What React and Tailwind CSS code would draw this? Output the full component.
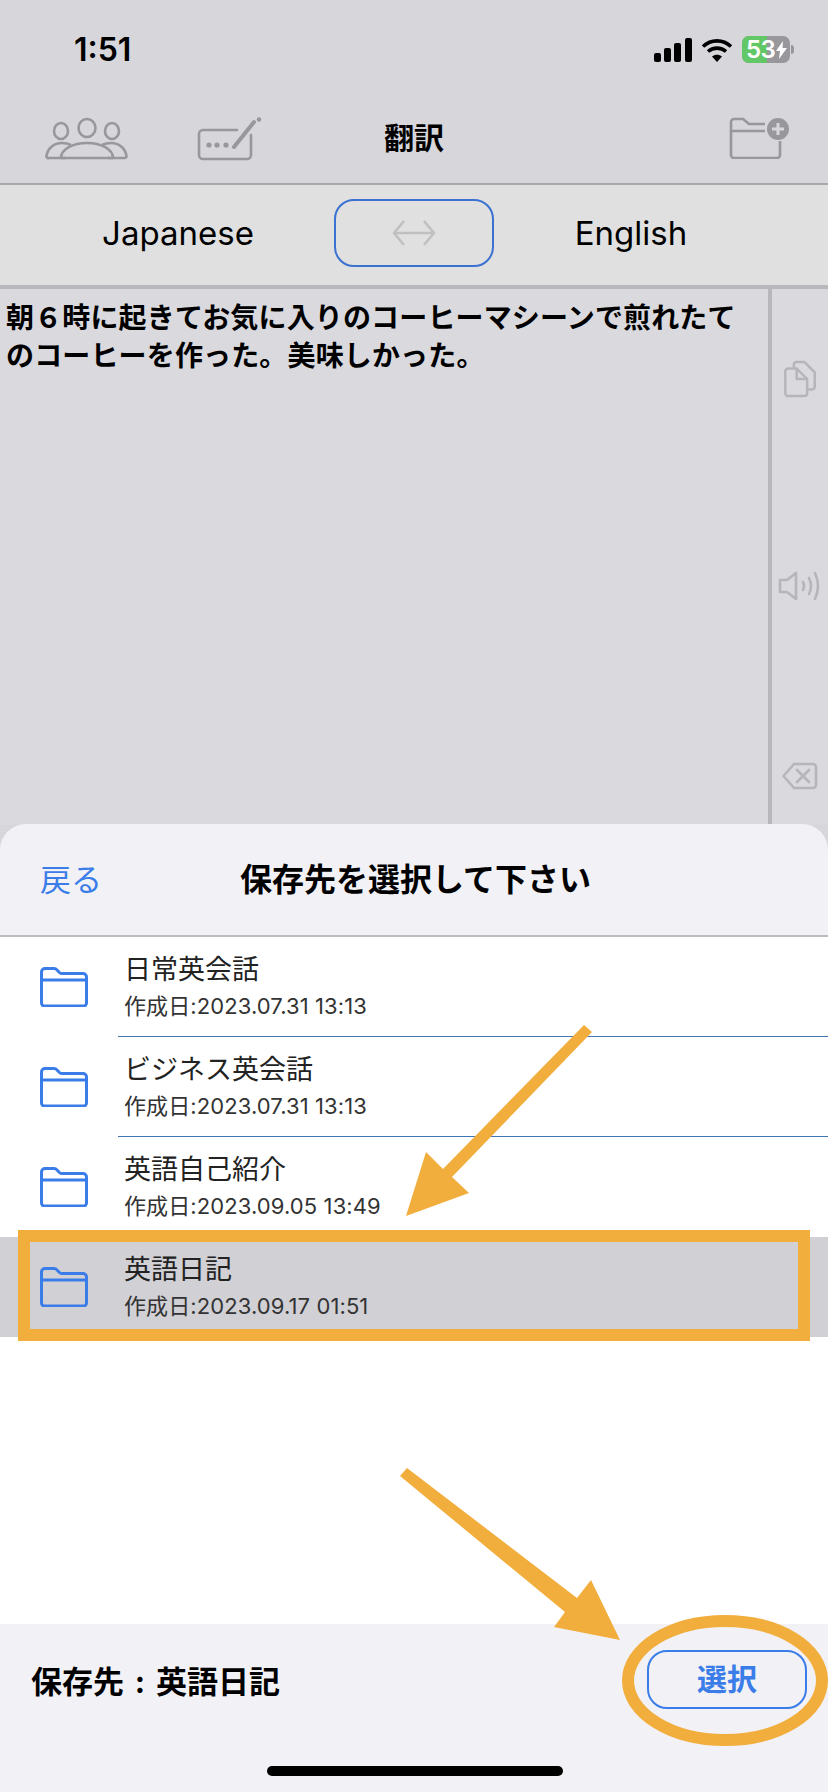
const font = "font-['Inter','Noto_Sans_CJK_JP',sans-serif]";

const folders = [
  { name: "日常英会話", date: "作成日:2023.07.31 13:13" },
  { name: "ビジネス英会話", date: "作成日:2023.07.31 13:13" },
  { name: "英語自己紹介", date: "作成日:2023.09.05 13:49" },
  { name: "英語日記", date: "作成日:2023.09.17 01:51", selected: true },
];

const FolderIcon = () => (
  <svg width="48" height="40" viewBox="0 0 48 40" fill="none" stroke="#3b7de8" strokeWidth="3" strokeLinejoin="round">
    <path d="M1.5 5 a3.5 3.5 0 0 1 3.5 -3.5 h9 a4 4 0 0 1 3 1.4 l2 2.2 a4 4 0 0 0 3 1.4 h21 a3.5 3.5 0 0 1 3.5 3.5 v26 a3 3 0 0 1 -3 3 h-39 a3 3 0 0 1 -3 -3 z" />
    <path d="M1.5 13 h45" />
  </svg>
);

const PeopleIcon = () => (
  <svg width="84" height="44" viewBox="0 0 84 44" fill="none" stroke="#98989c" strokeWidth="2.6">
    <ellipse cx="16" cy="14" rx="7" ry="8" />
    <ellipse cx="42" cy="11" rx="8.5" ry="9" />
    <ellipse cx="67" cy="14" rx="7" ry="8" />
    <path d="M21 41 H4 a2 2 0 0 1 -2.5 -2.5 C3 31 9 26 17 26 c4 0 7 1 9 2" />
    <path d="M16 41 c0 -9 12 -15 26 -15 s26 6 26 15 z" strokeLinejoin="round" />
    <path d="M63 41 h16.5 a2 2 0 0 0 2 -2.5 C80 31 74 26 66 26 c-4 0 -7 1 -9 2" />
  </svg>
);

const KeyboardPenIcon = () => (
  <svg width="66" height="44" viewBox="0 0 66 44" fill="none" stroke="#98989c" strokeWidth="2.6" strokeLinecap="round">
    <path d="M40 13 H6 a4 4 0 0 0 -4 4 v21 a4 4 0 0 0 4 4 h44 a4 4 0 0 0 4 -4 V18" />
    <circle cx="12" cy="28" r="2.6" fill="#98989c" stroke="none" />
    <circle cx="20" cy="28" r="2.6" fill="#98989c" stroke="none" />
    <circle cx="29" cy="28" r="2.6" fill="#98989c" stroke="none" />
    <path d="M37 30 L57 5" strokeWidth="4" />
    <circle cx="62" cy="2.5" r="2.2" fill="#98989c" stroke="none" />
  </svg>
);

const FolderPlusIcon = () => (
  <svg width="60" height="42" viewBox="0 0 60 42" fill="none">
    <path d="M36 7 H20 l-6 -5 H5 a3 3 0 0 0 -3 3 v33 a3 3 0 0 0 3 3 h43 a3 3 0 0 0 3 -3 V24 M2 14 h34" stroke="#98989c" strokeWidth="2.6" strokeLinejoin="round" />
    <circle cx="49" cy="12" r="11" fill="#98989c" />
    <path d="M49 6 v12 M43 12 h12" stroke="#d6d6db" strokeWidth="3" />
  </svg>
);

const CopyIcon = () => (
  <svg width="33" height="38" viewBox="0 0 34 40" fill="none" stroke="#b5b5ba" strokeWidth="2.6" strokeLinejoin="round">
    <path d="M10 8 V5 a3 3 0 0 1 3 -3 h8 l11 11 v15 a3 3 0 0 1 -3 3 h-4" />
    <path d="M4 9 h9 l11 11 v15 a3 3 0 0 1 -3 3 H4 a3 3 0 0 1 -3 -3 V12 a3 3 0 0 1 3 -3 z" />
    <path d="M13 9 v11 h11" />
  </svg>
);

const SpeakerIcon = () => (
  <svg width="44" height="30" viewBox="0 0 44 30" fill="none" stroke="#b5b5ba" strokeWidth="2.6" strokeLinecap="round" strokeLinejoin="round">
    <path d="M2 9 h7 L18 2 v26 L9 21 H2 z" />
    <path d="M25 11 q2 4 0 8" />
    <path d="M31 7 q4 8 0 16" />
    <path d="M37 2 q6 13 0 26" />
  </svg>
);

const DeleteIcon = () => (
  <svg width="36" height="28" viewBox="0 0 36 28" fill="none" stroke="#b5b5ba" strokeWidth="2.6" strokeLinejoin="round">
    <path d="M12 2 H31 a3 3 0 0 1 3 3 v18 a3 3 0 0 1 -3 3 H12 L1.5 14 z" />
    <path d="M15 8 l12 12 M27 8 l-12 12" strokeLinecap="round" />
  </svg>
);

const SwapIcon = () => (
  <svg width="44" height="28" viewBox="0 0 44 28" fill="none" stroke="#c0c0c0" strokeWidth="2.6" strokeLinejoin="round">
    <path d="M12 2 L2 14 L12 26 M32 2 L42 14 L32 26 M2 14 H42" />
  </svg>
);

const StatusIcons = () => (
  <div className="flex h-[27px] items-center gap-[9px]">
    <svg width="38" height="24" viewBox="0 0 38 24" fill="#000">
      <rect x="0" y="15" width="7" height="9" rx="2" />
      <rect x="10" y="10" width="7" height="14" rx="2" />
      <rect x="20" y="5" width="7" height="19" rx="2" />
      <rect x="31" y="0" width="7" height="24" rx="2" />
    </svg>
    <svg width="32" height="24" viewBox="0 0 32 24" fill="none" stroke="#000" strokeWidth="3.6">
      <path d="M2 8.5 C10 1 22 1 30 8.5" />
      <path d="M7 13.5 C12 9 20 9 25 13.5" />
      <path d="M16 24 l-5 -5.5 C14 16 18 16 21 18.5 z" fill="#000" stroke="none" />
    </svg>
    <div className="flex items-center gap-[1px]">
      <div className="relative flex h-[27px] w-[48px] items-center overflow-hidden rounded-[7px] bg-[#98989c]">
        <div className="absolute inset-y-0 left-0 w-[25px] bg-[#62c766]" />
        <span className="relative pl-[4px] text-[24px] leading-none font-semibold tracking-[-0.5px] text-white">53</span>
        <svg className="relative ml-[1px]" width="11" height="18" viewBox="0 0 11 18" fill="#fff">
          <path d="M7 0 L0 10 h4 L3 18 L11 7 H6.5 z" />
        </svg>
      </div>
      <div className="h-[9px] w-[3px] rounded-r-full bg-[#98989c]" />
    </div>
  </div>
);

// hand drawn annotations on top of the screenshot
const Annotations = () => (
  <svg className="absolute top-0 left-0" width="828" height="1792" viewBox="0 0 828 1792">
    <rect x="24" y="1236" width="780" height="99" fill="none" stroke="#f2ae3d" strokeWidth="12" />
    <ellipse cx="725" cy="1680.5" rx="97" ry="59.5" fill="none" stroke="#f2ae3d" strokeWidth="12" />
    <polygon points="584,1025 592,1032 452,1177 469,1193 406,1216 426,1152 443,1169" fill="#f2ae3d" />
    <polygon points="407,1468 577,1598 591,1580 620,1640 554,1627 565,1612 400,1476" fill="#f2ae3d" />
  </svg>
);

export default function App() {
  return (
    <div className={`relative flex h-[1792px] w-[828px] flex-col overflow-hidden bg-[#d6d6db] ${font}`}>
      {/* Status bar */}
      <div className="flex h-[96px] items-start justify-between pt-[36px] pr-[34px] pl-[74px]">
        <span className="text-[32px] leading-[27px] font-semibold text-black">1:51</span>
        <StatusIcons />
      </div>

      {/* Nav bar */}
      <div className="relative flex h-[89px] items-start justify-between border-b-2 border-[#a9a9ad] pt-[21px] pr-[39px] pl-[45px]">
        <div className="flex items-start gap-[68px]">
          <PeopleIcon />
          <KeyboardPenIcon />
        </div>
        <span className="absolute top-[20px] left-0 w-full text-center text-[30px] leading-[44px] font-bold text-black">翻訳</span>
        <FolderPlusIcon />
      </div>

      {/* Language bar */}
      <div className="flex h-[104px] items-start justify-center border-b-4 border-[#b8b8bc] bg-[#e0e0e0] pt-[14px]">
        <span className="w-[334px] pt-[14px] pl-[22px] text-center text-[33px] leading-[40px] text-black">Japanese</span>
        <div className="flex h-[68px] w-[160px] items-center justify-center rounded-[20px] border-2 border-[#3b71d0]">
          <SwapIcon />
        </div>
        <span className="w-[334px] pt-[14px] pr-[60px] text-center text-[33px] leading-[40px] text-black">English</span>
      </div>

      {/* Text area with side tools */}
      <div className="flex h-[536px] bg-[#d9d9de]">
        <p className="flex-1 pt-[10px] pr-[24px] pl-[6px] text-[28px] leading-[38px] font-bold tracking-[0.15px] text-black">
          朝６時に起きてお気に入りのコーヒーマシーンで煎れたてのコーヒーを作った。美味しかった。
        </p>
        <div className="flex w-[60px] flex-col items-center border-l-4 border-[#b8b8bc] pt-[71px]">
          <CopyIcon />
          <div className="mt-[173px]">
            <SpeakerIcon />
          </div>
          <div className="mt-[161px]">
            <DeleteIcon />
          </div>
        </div>
      </div>

      {/* Bottom sheet */}
      <div className="absolute top-[824px] left-0 flex h-[968px] w-full flex-col rounded-t-[26px] bg-[#f1f1f6]">
        <div className="relative flex h-[113px] items-center border-b-2 border-[#bcbcc0] pl-[40px]">
          <span className="text-[31px] leading-none text-[#3b7de8]">戻る</span>
          <span className="absolute left-[240px] text-[32px] leading-none font-bold text-black">保存先を選択して下さい</span>
        </div>
        <div className="flex h-[687px] flex-col bg-white">
          {folders.map((f, i) => (
            <div key={f.name} className={`flex h-[100px] ${f.selected ? "bg-[#d0d0d5]" : ""}`}>
              <div className="flex w-[118px] shrink-0 items-center pl-[40px]">
                <FolderIcon />
              </div>
              <div className={`flex flex-1 flex-col pt-[15px] pl-[6px] ${i < 2 ? "border-b border-[#3f75b5]" : ""}`}>
                <span className="text-[27px] leading-[36px] text-[#222]">{f.name}</span>
                <span className="mt-[3px] text-[22px] leading-[30px] tracking-[0.1px] text-[#333]">{f.date}</span>
              </div>
            </div>
          ))}
        </div>
        <div className="flex flex-1 items-start justify-between pt-[26px] pr-[21px] pl-[31px]">
          <span className="pt-[12px] text-[31px] leading-[40px] font-bold [word-spacing:3.5px] text-black">保存先 : 英語日記</span>
          <div className="flex h-[59px] w-[160px] items-center justify-center rounded-[20px] border-2 border-[#3b7de8] text-[30px] font-bold text-[#3b7de8]">
            選択
          </div>
        </div>
        <div className="absolute bottom-[16px] left-[267px] h-[10px] w-[296px] rounded-full bg-black" />
      </div>

      <Annotations />
    </div>
  );
}
